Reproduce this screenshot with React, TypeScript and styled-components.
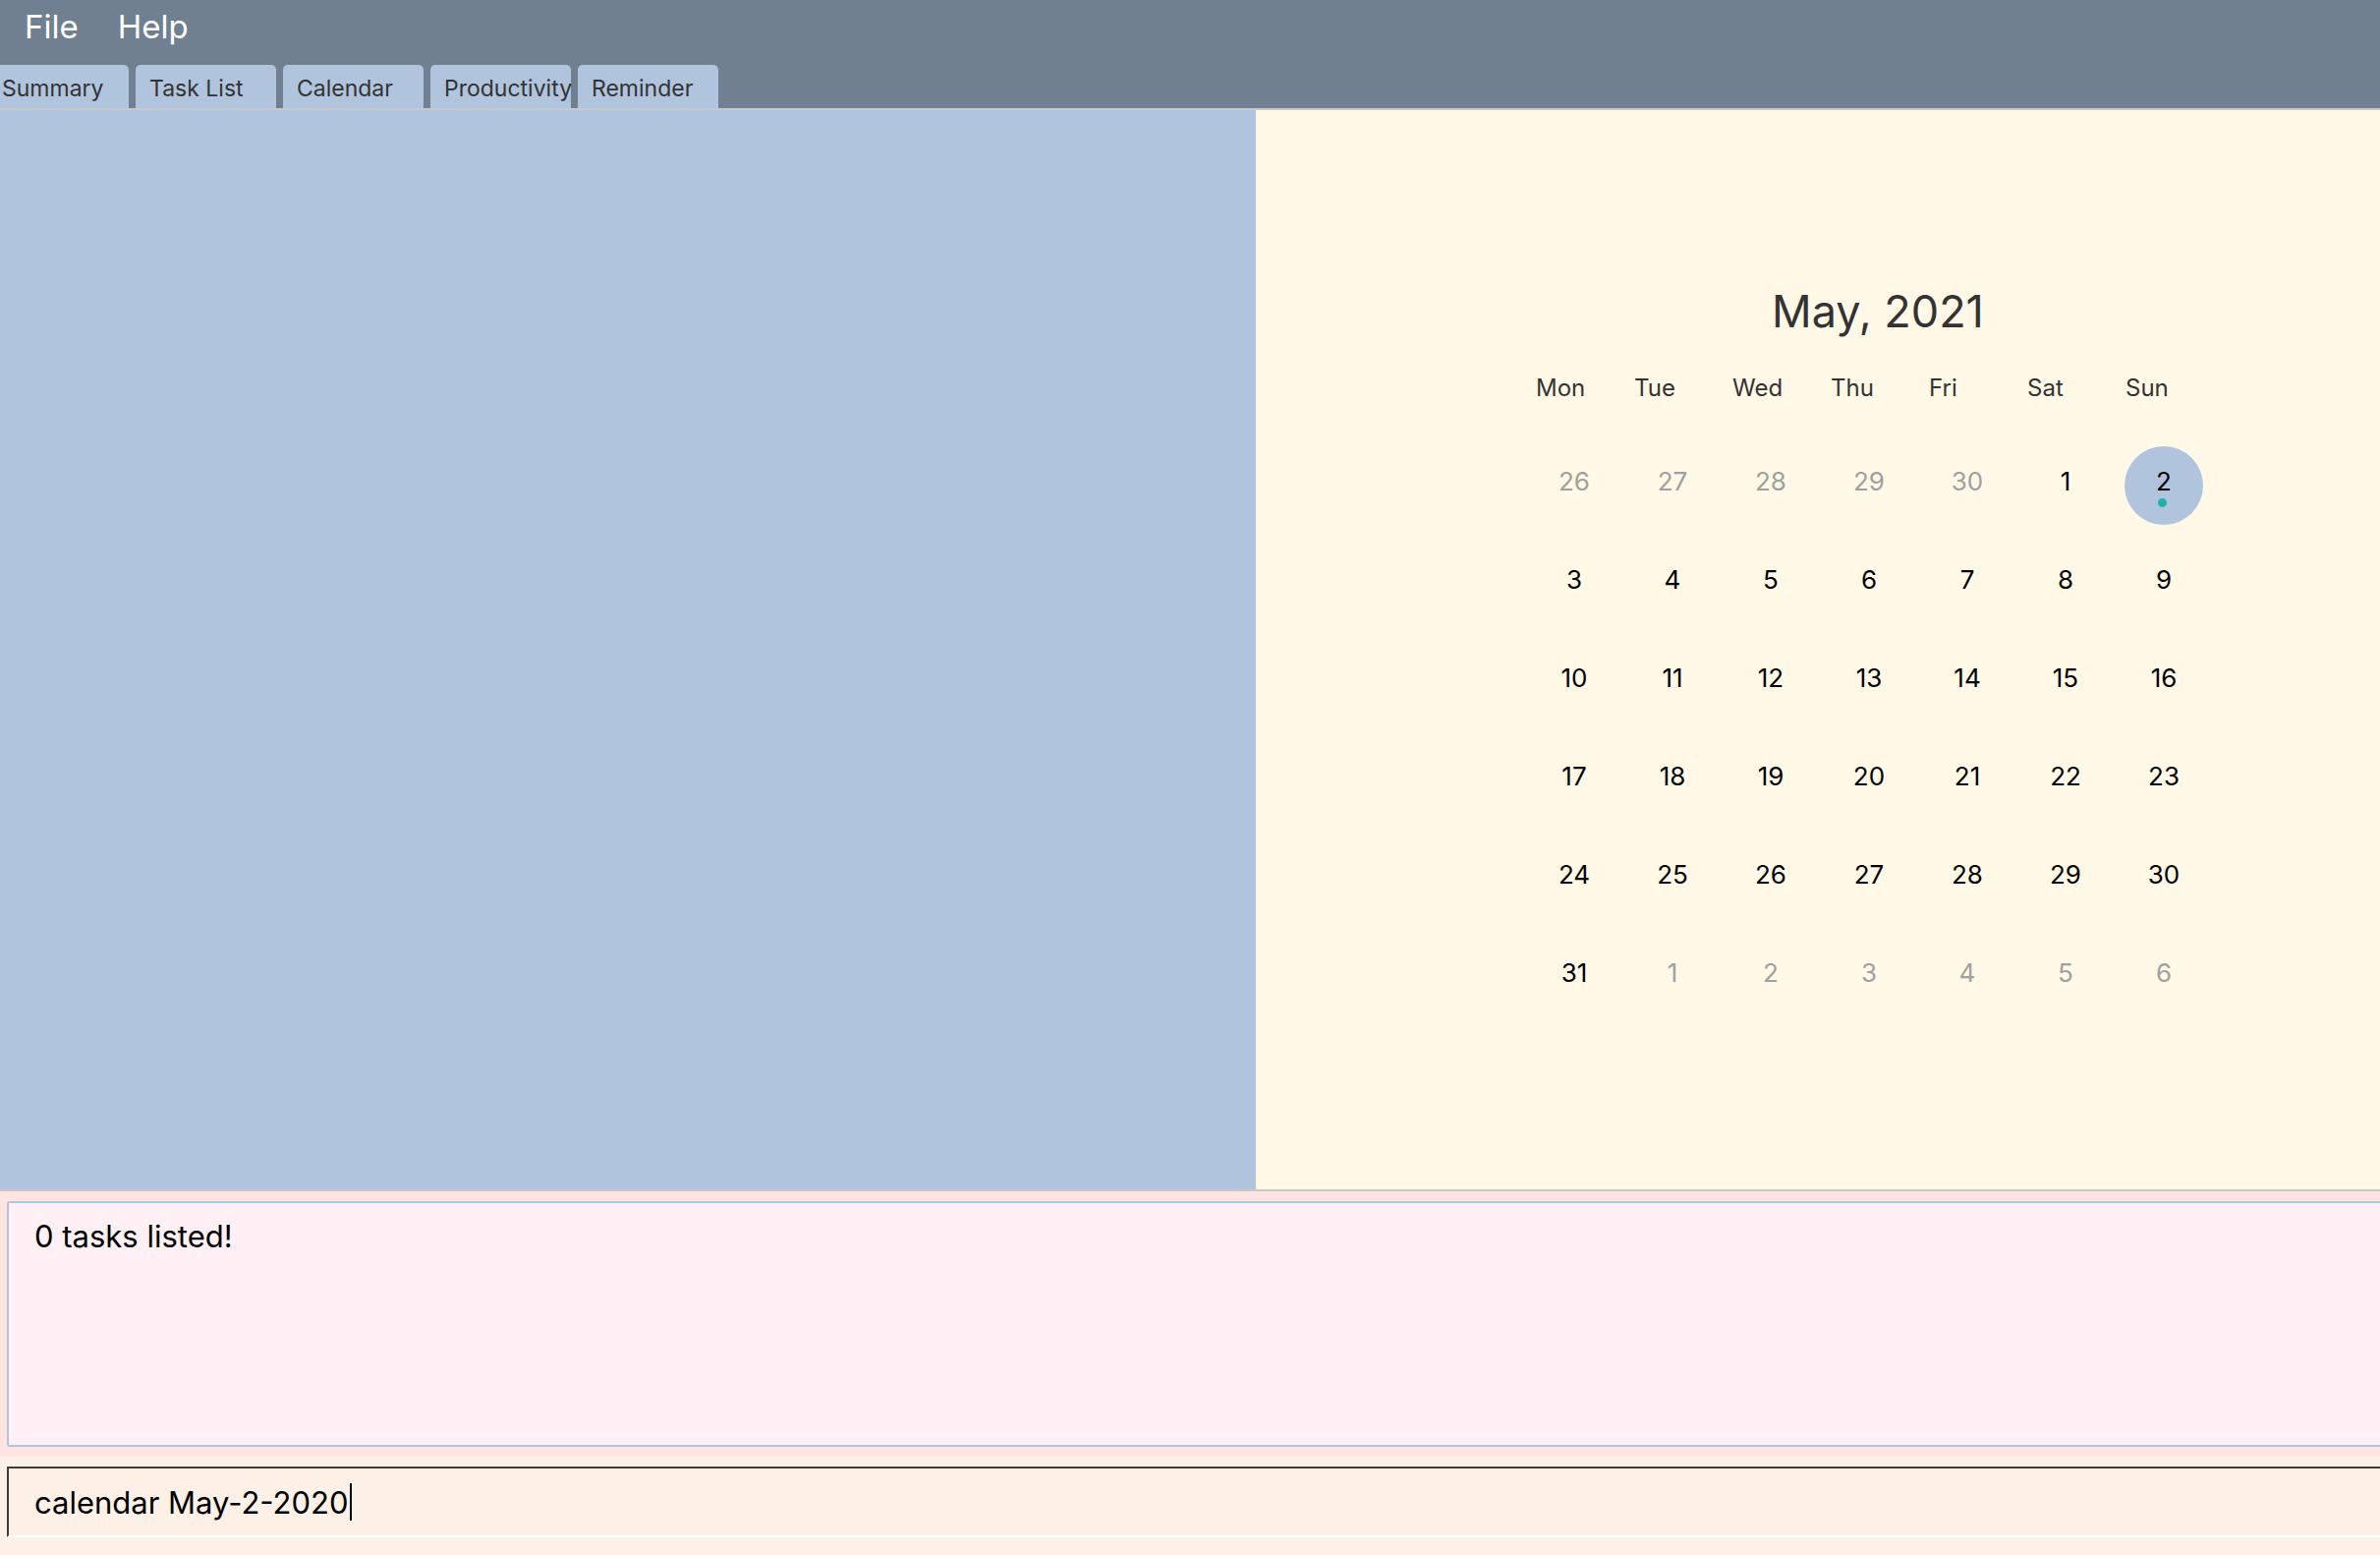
import styled, { createGlobalStyle } from "styled-components";

const GlobalStyle = createGlobalStyle`
  html, body {
    margin: 0;
    padding: 0;
    height: 100%;
    overflow: hidden;
  }
  #root {
    height: 100%;
  }
  * {
    box-sizing: border-box;
  }
`;

type Day = { n: number; muted?: boolean; selected?: boolean };

const weekdays = ["Mon", "Tue", "Wed", "Thu", "Fri", "Sat", "Sun"];

const weeks: Day[][] = [
  [
    { n: 26, muted: true },
    { n: 27, muted: true },
    { n: 28, muted: true },
    { n: 29, muted: true },
    { n: 30, muted: true },
    { n: 1 },
    { n: 2, selected: true },
  ],
  [3, 4, 5, 6, 7, 8, 9].map((n) => ({ n })),
  [10, 11, 12, 13, 14, 15, 16].map((n) => ({ n })),
  [17, 18, 19, 20, 21, 22, 23].map((n) => ({ n })),
  [24, 25, 26, 27, 28, 29, 30].map((n) => ({ n })),
  [{ n: 31 }, ...[1, 2, 3, 4, 5, 6].map((n) => ({ n, muted: true }))],
];

const tabs = ["Summary", "Task List", "Calendar", "Productivity", "Reminder"];

export default function App() {
  return (
    <Window>
      <GlobalStyle />
      <MenuBar>
        <MenuItem>File</MenuItem>
        <MenuItem>Help</MenuItem>
      </MenuBar>
      <TabBar>
        {tabs.map((t) => (
          <Tab key={t}>{t}</Tab>
        ))}
      </TabBar>
      <Separator />
      <Main>
        <ListPanel />
        <CalendarPanel>
          <Calendar>
            <MonthTitle>May, 2021</MonthTitle>
            <Grid>
              {weekdays.map((d) => (
                <WeekdayCell key={d}>{d}</WeekdayCell>
              ))}
              {weeks.flat().map((d, i) => (
                <DayCell key={i}>
                  <Bubble $selected={d.selected}>
                    <DayNumber $muted={d.muted}>{d.n}</DayNumber>
                    {d.selected && <EventDot />}
                  </Bubble>
                </DayCell>
              ))}
            </Grid>
          </Calendar>
        </CalendarPanel>
      </Main>
      <Separator />
      <ResultArea>
        <ResultBox>0 tasks listed!</ResultBox>
      </ResultArea>
      <CommandArea>
        <CommandBox>
          calendar May-2-2020
          <Caret />
        </CommandBox>
      </CommandArea>
    </Window>
  );
}

// Styles
const Window = styled.div`
  height: 1582px;
  display: flex;
  flex-direction: column;
  overflow: hidden;
  font-family: Inter, "Noto Sans", "Liberation Sans", sans-serif;
`;

const MenuBar = styled.div`
  height: 66px;
  flex-shrink: 0;
  background: #708090;
  display: flex;
  align-items: flex-start;
  padding: 8px 0 0 5px;
`;

const MenuItem = styled.div`
  padding: 0 20px;
  font-size: 33px;
  line-height: 38px;
  color: #ffffff;
`;

const TabBar = styled.div`
  height: 44px;
  flex-shrink: 0;
  background: #708090;
  display: flex;
  gap: 7px;
  margin-left: -12px;
  padding-right: 12px;
`;

const Tab = styled.div`
  width: 143px;
  height: 44px;
  flex-shrink: 0;
  background: #b0c4de;
  border-radius: 5px 5px 0 0;
  padding: 3px 0 0 14px;
  display: flex;
  align-items: center;
  font-size: 23px;
  color: #333333;
  white-space: nowrap;
`;

const Separator = styled.div`
  height: 2px;
  flex-shrink: 0;
  background: #c8c8c8;
`;

const Main = styled.div`
  height: 1098px;
  flex-shrink: 0;
  display: flex;
`;

const ListPanel = styled.div`
  width: 1278px;
  flex-shrink: 0;
  background: #b0c4de;
`;

const CalendarPanel = styled.div`
  flex: 1;
  background: #fff8e7;
  padding: 177px 0 0 274px;
`;

const Calendar = styled.div`
  width: 700px;
  display: flex;
  flex-direction: column;
`;

const MonthTitle = styled.div`
  height: 56px;
  line-height: 56px;
  text-align: center;
  padding-left: 18px;
  font-size: 45px;
  color: #333333;
`;

const Grid = styled.div`
  display: grid;
  grid-template-columns: repeat(7, 100px);
  grid-template-rows: 94px repeat(6, 100px);
`;

const WeekdayCell = styled.div`
  display: flex;
  align-items: center;
  padding: 5px 0 0 11px;
  font-size: 24px;
  color: #333333;
`;

const DayCell = styled.div`
  display: flex;
  align-items: center;
  justify-content: center;
  padding-top: 10px;
`;

const Bubble = styled.div<{ $selected?: boolean }>`
  position: relative;
  width: 80px;
  height: 80px;
  border-radius: 50%;
  background: ${(p) => (p.$selected ? "#b0c4de" : "transparent")};
  display: flex;
  align-items: center;
  justify-content: center;
  padding-bottom: 8px;
`;

const DayNumber = styled.span<{ $muted?: boolean }>`
  font-size: 26px;
  line-height: 30px;
  color: ${(p) => (p.$muted ? "#a0a0a0" : "#000000")};
`;

const EventDot = styled.span`
  position: absolute;
  left: 50%;
  bottom: 18px;
  width: 9px;
  height: 9px;
  margin-left: -6px;
  border-radius: 50%;
  background: #20b2aa;
`;

const ResultArea = styled.div`
  height: 270px;
  flex-shrink: 0;
  background: #ffe4e1;
  padding: 10px 0 10px 7px;
  display: flex;
`;

const ResultBox = styled.div`
  flex: 1;
  margin-right: -20px;
  background: #fff0f5;
  border: 2px solid #b0c4de;
  border-radius: 3px;
  padding: 14px 26px;
  font-size: 31px;
  line-height: 40px;
  color: #000000;
`;

const CommandArea = styled.div`
  height: 100px;
  flex-shrink: 0;
  background: #fdf0e6;
  padding: 10px 0 0 7px;
  display: flex;
  align-items: flex-start;
`;

const CommandBox = styled.div`
  flex: 1;
  margin-right: -20px;
  height: 72px;
  border-top: 2px solid #3c3c3c;
  border-left: 2px solid #3c3c3c;
  border-bottom: 2px solid #ffffff;
  padding-left: 26px;
  display: flex;
  align-items: center;
  font-size: 31px;
  color: #000000;
  white-space: pre;
`;

const Caret = styled.span`
  width: 2px;
  height: 38px;
  margin-left: 1px;
  background: #000000;
`;
